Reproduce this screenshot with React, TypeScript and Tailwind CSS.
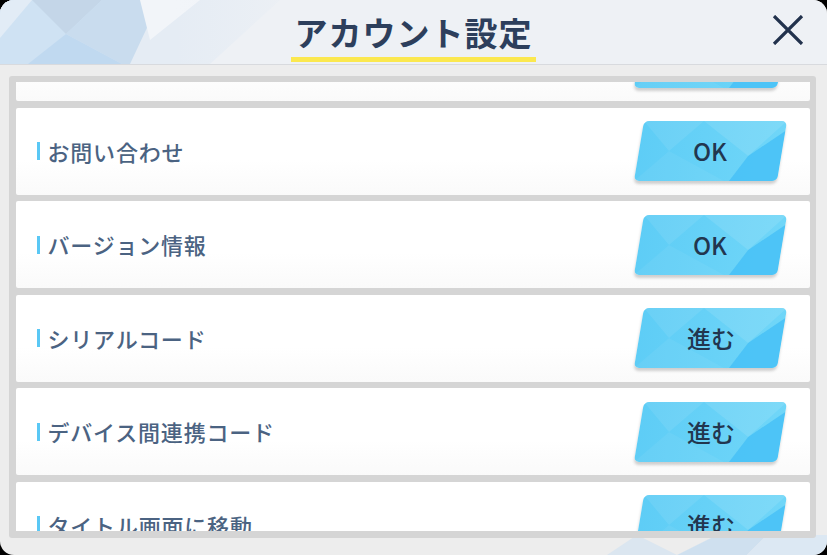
const rows = [
  { label: "", action: "" },
  { label: "お問い合わせ", action: "OK" },
  { label: "バージョン情報", action: "OK" },
  { label: "シリアルコード", action: "進む" },
  { label: "デバイス間連携コード", action: "進む" },
  { label: "タイトル画面に移動", action: "進む" },
];

const font = { fontFamily: '"Noto Sans CJK JP", "Noto Sans", sans-serif' };

const HeaderDeco = () => (
  <svg className="absolute left-0 top-0" width="827" height="64" viewBox="0 0 827 64">
    <defs>
      <linearGradient id="fade" x1="0" x2="1" y1="0" y2="0">
        <stop offset="0" stopColor="#eef1f5" stopOpacity="0" />
        <stop offset="0.55" stopColor="#eef1f5" stopOpacity="0" />
        <stop offset="1" stopColor="#eef1f5" stopOpacity="1" />
      </linearGradient>
    </defs>
    <polygon points="0,0 160,0 130,64 0,64" fill="#cfe2f3" />
    <polygon points="0,0 32,0 0,38" fill="#e2ecf6" />
    <polygon points="32,0 102,0 66,34" fill="#c4d6e8" />
    <polygon points="66,34 28,64 122,64" fill="#c0d9f0" />
    <polygon points="102,0 160,0 135,64 122,64 66,34" fill="#c9dcee" />
    <polygon points="160,0 280,0 210,64 130,64" fill="#e5ecf4" />
    <polygon points="140,0 200,0 150,40" fill="#f2f5f9" />
    <rect x="0" y="0" width="320" height="64" fill="url(#fade)" />
  </svg>
);

const ButtonDeco = () => (
  <svg className="absolute inset-0 h-full w-full" viewBox="0 0 143 60" preserveAspectRatio="none">
    <polygon points="0,0 60,0 30,30" fill="#ffffff" opacity="0.08" />
    <polygon points="60,0 143,0 110,35" fill="#ffffff" opacity="0.1" />
    <polygon points="30,30 90,60 0,60" fill="#ffffff" opacity="0.05" />
    <polygon points="110,35 143,10 143,60 95,60" fill="#45bff6" opacity="0.8" />
  </svg>
);

const ActionButton = ({ text }: { text: string }) => (
  <div className="relative flex h-[60px] w-[143px] skew-x-[-9.5deg] items-center justify-center overflow-hidden rounded-[5px] bg-gradient-to-r from-[#5ecdf6] to-[#70d6f8] shadow-[0_3px_3px_rgba(0,0,0,0.18)]">
    <ButtonDeco />
    {text && (
      <span className="relative skew-x-[9.5deg] text-[24px] font-medium text-[#22364f]" style={font}>
        {text}
      </span>
    )}
  </div>
);

export default function App() {
  return (
    <div className="h-[555px] w-[827px] bg-black" style={font}>
      <div className="relative flex h-full flex-col overflow-hidden rounded-[14px] bg-[#ededed]">
        <header className="relative flex h-[65px] shrink-0 justify-center border-b border-[#d8dade] bg-[#eef1f5]">
          <HeaderDeco />
          <div className="relative flex flex-col items-center pt-[10px]">
            <h1 className="text-[33px] font-bold leading-[44px] tracking-[1px] text-[#2d3f5c]">
              アカウント設定
            </h1>
            <div className="mt-[3px] h-[5px] w-[245px] bg-[#fbe84f]" />
          </div>
          <button className="absolute right-[23px] top-[15px]">
            <svg width="32" height="30" viewBox="0 0 32 30">
              <path d="M2 1 L30 29 M30 1 L2 29" stroke="#22324d" strokeWidth="3.2" fill="none" />
            </svg>
          </button>
        </header>

        <div className="relative min-h-0 flex-1 pb-[17px] pl-[9px] pr-[11px] pt-[11px]">
          <svg className="absolute bottom-0 right-0" width="260" height="20" viewBox="0 0 260 20">
            <polygon points="40,20 70,0 110,20" fill="#dbe6f0" />
            <polygon points="110,20 150,0 200,0 180,20" fill="#cfe0ef" />
            <polygon points="180,20 200,0 260,0 260,20" fill="#dce8f3" />
          </svg>
          <div className="relative h-full rounded-[3px] bg-[#d5d5d5] pb-[7px] pl-[7px] pr-[6px] pt-[6px]">
            <div className="h-full overflow-hidden">
              <div className="mt-[-68px] flex flex-col gap-[6.5px]">
                {rows.map((r, i) => (
                  <div
                    key={i}
                    className="flex h-[87px] shrink-0 items-center justify-between rounded-[2px] bg-gradient-to-b from-white from-60% to-[#fafafa] pl-[21px] pr-[28px]"
                  >
                    <div className="flex items-center gap-[8px]">
                      {r.label && <div className="h-[18px] w-[2.5px] bg-[#5ac8f5]" />}
                      <span className="text-[22px] font-medium tracking-[0.8px] text-[#4b6382]">{r.label}</span>
                    </div>
                    <ActionButton text={r.action} />
                  </div>
                ))}
              </div>
            </div>
          </div>
        </div>
      </div>
    </div>
  );
}
